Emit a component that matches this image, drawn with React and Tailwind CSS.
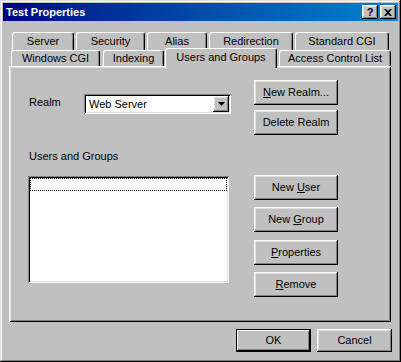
import React from 'react'

const RAISED = 'shadow-[inset_-1px_-1px_#000,inset_1px_1px_#fff,inset_-2px_-2px_#808080,inset_2px_2px_#dfdfdf]'
const SUNKEN = 'shadow-[inset_1px_1px_#808080,inset_-1px_-1px_#fff,inset_2px_2px_#000,inset_-2px_-2px_#dfdfdf]'

const BACK_ROW = [
  { label: 'Server', cls: 'w-[62px]' },
  { label: 'Security', cls: 'w-[69px]' },
  { label: 'Alias', cls: 'w-[60px]' },
  { label: 'Redirection', cls: 'w-[84px]' },
  { label: 'Standard CGI', cls: 'w-[94px]' },
]

const FRONT_ROW = [
  { label: 'Windows CGI', cls: 'w-[89px]' },
  { label: 'Indexing', cls: 'w-[61px] ml-[3px]' },
  { label: 'Users and Groups', cls: 'w-[112px] ml-[1px]', selected: true },
  { label: 'Access Control List', cls: 'w-[112px] ml-[2px]' },
]

function Tab({ label, cls, selected }) {
  if (selected) {
    return (
      <div
        className={`${cls} relative z-10 -mt-[2px] h-[20px] bg-[#c0c0c0] border-l border-t border-white border-r border-r-black rounded-t-[3px] shadow-[inset_-1px_0_#808080] flex justify-center pt-[2px]`}
      >
        {label}
      </div>
    )
  }
  return (
    <div
      className={`${cls} h-full bg-[#c0c0c0] border-l border-t border-white border-r border-r-black rounded-t-[3px] shadow-[inset_-1px_0_#808080] flex items-center justify-center`}
    >
      {label}
    </div>
  )
}

function Button({ children, cls = '' }) {
  return (
    <div className={`w-[84px] h-[25px] bg-[#c0c0c0] ${RAISED} flex items-center justify-center ${cls}`}>
      {children}
    </div>
  )
}

function Acc({ children }) {
  return <span className="underline underline-offset-[1px] decoration-1">{children}</span>
}

export default function App() {
  return (
    <div
      className={`w-[401px] h-[362px] bg-[#c0c0c0] p-[3px] flex flex-col text-[11px] text-black leading-[13px] shadow-[inset_-1px_-1px_#000,inset_1px_1px_#dfdfdf,inset_-2px_-2px_#808080,inset_2px_2px_#fff]`}
      style={{ fontFamily: '"Liberation Sans", Arial, sans-serif' }}
    >
      {/* Title bar */}
      <div className="h-[18px] flex items-center bg-gradient-to-r from-[#000080] to-[#1084d0] pl-[3px] pr-[2px]">
        <span className="flex-1 font-bold text-white">Test Properties</span>
        <div className={`w-[16px] h-[14px] ${RAISED} bg-[#c0c0c0] flex items-center justify-center font-bold text-[11px] leading-none`}>
          ?
        </div>
        <div className={`w-[16px] h-[14px] ml-[2px] ${RAISED} bg-[#c0c0c0] flex items-center justify-center`}>
          <svg width="8" height="7" viewBox="0 0 8 7">
            <path d="M0 0h2l2 2 2-2h2l-3 3.5 3 3.5h-2l-2-2-2 2h-2l3-3.5z" fill="#000" />
          </svg>
        </div>
      </div>

      {/* Tabs */}
      <div className="mt-[11px] h-[18px] flex gap-[2px] ml-[9px]">
        {BACK_ROW.map(t => <Tab key={t.label} {...t} />)}
      </div>
      <div className="h-[16px] flex ml-[8px]">
        {FRONT_ROW.map(t => <Tab key={t.label} {...t} />)}
      </div>

      {/* Panel */}
      <div className="ml-[6px] w-[382px] h-[256px] shadow-[inset_1px_1px_#fff,inset_-1px_-1px_#000,inset_2px_2px_#dfdfdf,inset_-2px_-2px_#808080] p-[2px] flex">
        <div className="w-[220px] pl-[17px] pt-[26px] flex flex-col">
          <div className="flex items-center">
            <span className="w-[56px] pl-[1px] -mt-[3px]">Realm</span>
            <div className={`w-[147px] h-[20px] bg-white ${SUNKEN} p-[2px] flex items-center`}>
              <span className="flex-1 pl-[3px]">Web Server</span>
              <div className={`w-[16px] h-[16px] bg-[#c0c0c0] ${RAISED} flex items-center justify-center`}>
                <svg width="7" height="4" viewBox="0 0 7 4">
                  <path d="M0 0h7L3.5 4z" fill="#000" />
                </svg>
              </div>
            </div>
          </div>
          <span className="mt-[36px] pl-[1px]">Users and Groups</span>
          <div className={`mt-[13px] w-[201px] h-[107px] bg-white ${SUNKEN} p-[2px]`}>
            <div className="h-[13px] border border-dotted border-black" />
          </div>
        </div>

        <div className="ml-[23px] pt-[12px] flex flex-col">
          <Button><span><Acc>N</Acc>ew Realm...</span></Button>
          <Button cls="mt-[5px]">Delete Realm</Button>
          <Button cls="mt-[40px]"><span>New <Acc>U</Acc>ser</span></Button>
          <Button cls="mt-[7px]"><span>New <Acc>G</Acc>roup</span></Button>
          <Button cls="mt-[8px]"><span><Acc>P</Acc>roperties</span></Button>
          <Button cls="mt-[7px]"><span><Acc>R</Acc>emove</span></Button>
        </div>
      </div>

      {/* Dialog buttons */}
      <div className="mt-[7px] flex justify-end gap-[6px] pr-[6px]">
        <div className="w-[75px] h-[23px] border border-black">
          <div className="w-full h-full bg-[#c0c0c0] shadow-[inset_-1px_-1px_#000,inset_1px_1px_#fff,inset_-2px_-2px_#808080] flex items-center justify-center">
            OK
          </div>
        </div>
        <div className={`w-[75px] h-[23px] bg-[#c0c0c0] ${RAISED} flex items-center justify-center`}>
          Cancel
        </div>
      </div>
    </div>
  )
}
